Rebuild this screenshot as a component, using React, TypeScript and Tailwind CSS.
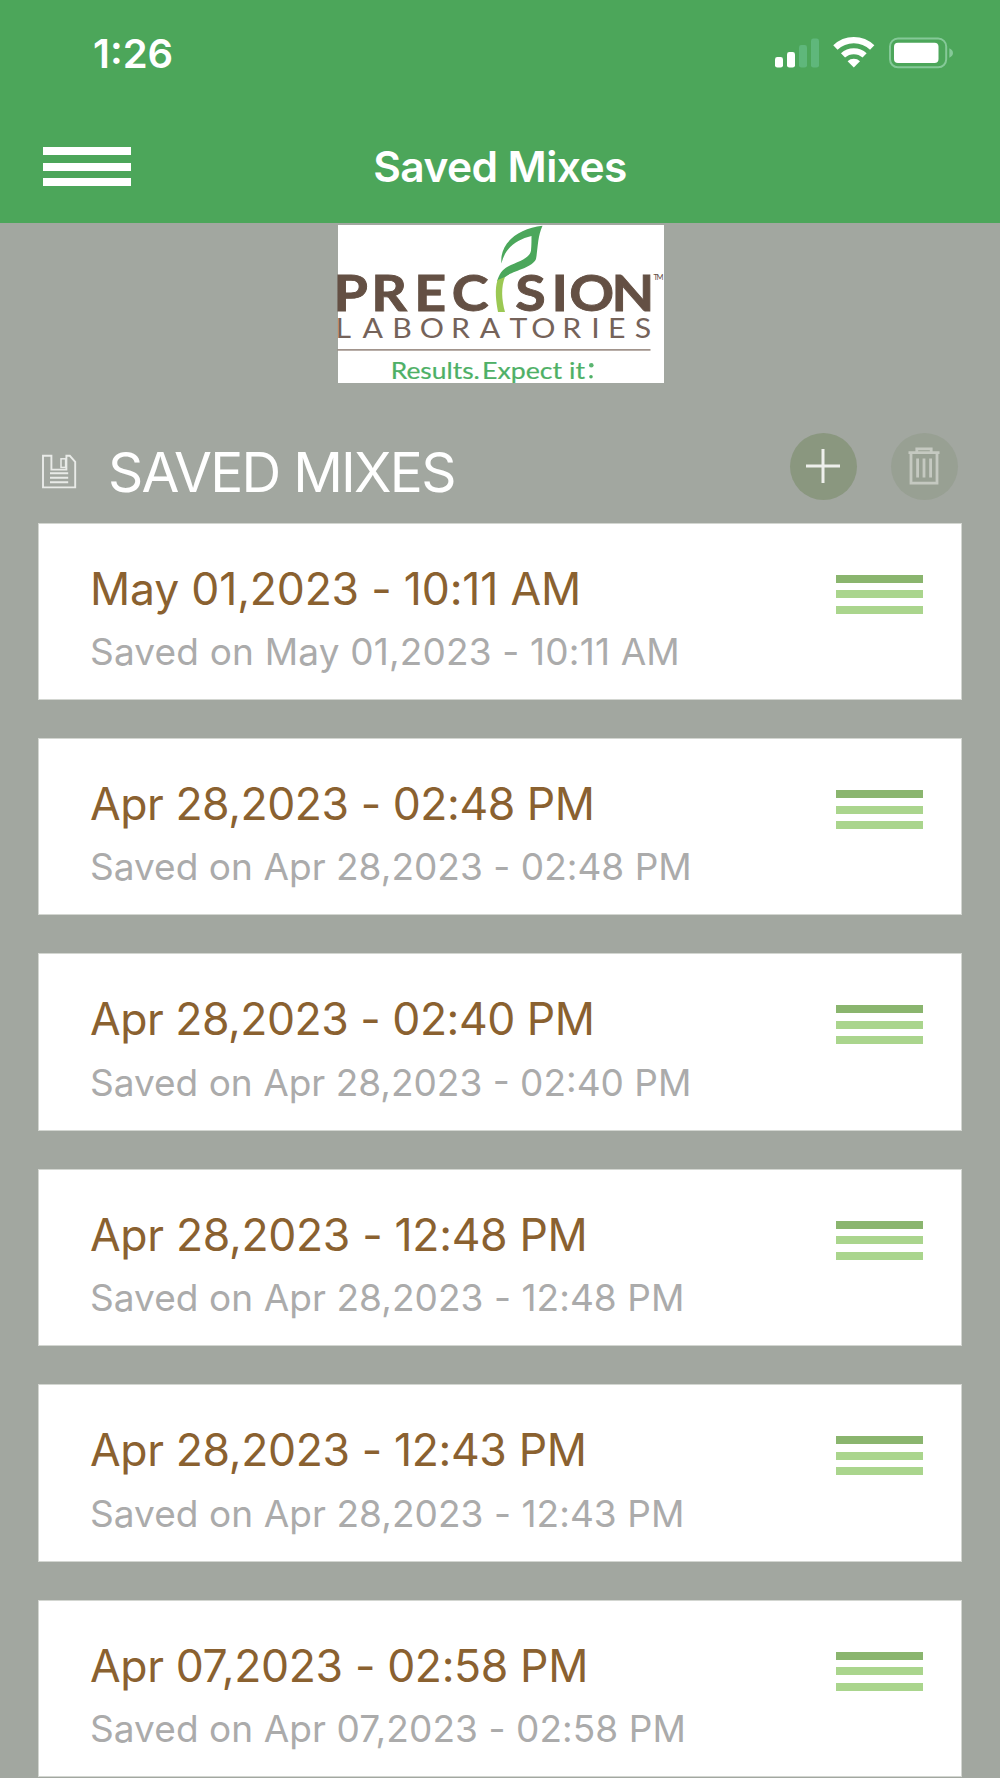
import clsx from 'clsx';

interface SavedMix {
    id: number;
    date: string;
    titleTracking: string;
    noteTracking: string;
}

const savedMixes: SavedMix[] = [
    { id: 1, date: 'May 01,2023 - 10:11 AM', titleTracking: 'tracking-[-0.18px]', noteTracking: 'tracking-[0.17px]' },
    { id: 2, date: 'Apr 28,2023 - 02:48 PM', titleTracking: 'tracking-[-0.45px]', noteTracking: 'tracking-[0.03px]' },
    { id: 3, date: 'Apr 28,2023 - 02:40 PM', titleTracking: 'tracking-[-0.48px]', noteTracking: 'tracking-[0px]' },
    { id: 4, date: 'Apr 28,2023 - 12:48 PM', titleTracking: 'tracking-[-0.32px]', noteTracking: 'tracking-[0.06px]' },
    { id: 5, date: 'Apr 28,2023 - 12:43 PM', titleTracking: 'tracking-[-0.36px]', noteTracking: 'tracking-[0.06px]' },
    { id: 6, date: 'Apr 07,2023 - 02:58 PM', titleTracking: 'tracking-[-0.36px]', noteTracking: 'tracking-[0.07px]' },
];

const StatusIcons = () => (
    <svg width="180" height="36" viewBox="774 35 180 36" fill="none">
        {/* Signal */}
        <rect x="775" y="57" width="8" height="10.6" rx="2.4" fill="#fff" />
        <rect x="787" y="52" width="8" height="15.6" rx="2.4" fill="#fff" />
        <rect x="799" y="45" width="8" height="22.6" rx="2.4" fill="#5fb77b" />
        <rect x="811" y="38.5" width="8" height="29.1" rx="2.4" fill="#5fb77b" />
        {/* Wifi */}
        <path d="M835.4 47.6A26.5 26.5 0 0 1 872.2 47.6" stroke="#fff" strokeWidth="6.2" />
        <path d="M843 55.4A15.8 15.8 0 0 1 864.6 55.4" stroke="#fff" strokeWidth="6" />
        <path d="M853.8 67.6L847.6 61.2A9 9 0 0 1 860 61.2Z" fill="#fff" />
        {/* Battery */}
        <rect x="890" y="38.5" width="56.2" height="28.8" rx="8" stroke="#85c998" strokeWidth="2" />
        <rect x="894" y="42.8" width="44.5" height="20.2" rx="4" fill="#fff" />
        <path d="M949.3 48.3C954.2 50.3 954.2 55.8 949.3 57.8Z" fill="#85c998" />
    </svg>
);

const Logo = () => (
    <svg width="326" height="158" viewBox="338 224.5 326 158" className="overflow-visible bg-white">
        <g fontFamily="Lato, sans-serif" fill="#645044">
            <g transform="scale(1.1 1)">
                <text x="303.1 337.5 376.7 410.6" y="311" fontWeight="700" fontSize="50.5" stroke="#645044" strokeWidth="0.9">PREC</text>
                <text x="468.5 501.3 517.6 556" y="311" fontWeight="700" fontSize="50.5" stroke="#645044" strokeWidth="0.9">SION</text>
                <text
                    x="305.1 329.5 356.6 381.6 410 436.1 463.2 482.9 511.2 537.5 552.7 577.1"
                    y="337.6"
                    fontSize="27.5"
                    fill="#75635a"
                >
                    LABORATORIES
                </text>
            </g>
            <text x="653.5" y="279" fontSize="7.5" textLength="10">TM</text>
        </g>
        <rect x="337.5" y="348.7" width="313" height="1.4" fill="#8b7b71" />
        {/* Leaf */}
        <path
            d="M501.5 263C499 243 518 228 542.5 225.3C537.5 236 538 248 536 258.5C532 268 512 270 504.5 277L497 281C499 274 502 269 508 266C517 261.5 530 258 531 250C531.5 245 531.5 240 531.5 235.5C517 239 505 247 501.5 263Z"
            fill="#4ba75b"
        />
        <path d="M497.5 279.5C494.5 289 496 301 498 311.5H505C501.5 299 501 286 505 276.5Z" fill="#9bc853" />
        <g fontFamily="Lato, sans-serif" fill="#4eb066" stroke="#4eb066" strokeWidth="0.2">
            <text x="390.8" y="378" fontSize="23.8" textLength="89" lengthAdjust="spacingAndGlyphs">Results.</text>
            <text x="482" y="378" fontSize="23.8" textLength="103" lengthAdjust="spacingAndGlyphs">Expect it</text>
        </g>
        <circle cx="591.3" cy="364.7" r="2.3" fill="#5bb571" />
        <circle cx="591" cy="376.3" r="1.8" fill="#4eb066" />
    </svg>
);

const SaveIcon = () => (
    <svg width="36" height="36" viewBox="0 0 36 36" fill="none" stroke="#e9ebe8">
        <path d="M2 1.8H10.4V15.6H25.4V1.8H28.8L34.2 7.8V33.4H2Z" strokeWidth="1.9" />
        <rect x="20" y="4.8" width="4.6" height="8.6" strokeWidth="1.5" />
        <path d="M9 19.2H27.2M9 23.7H27.2M9 28.3H27.2" strokeWidth="1.9" />
    </svg>
);

const PlusIcon = () => (
    <svg width="34" height="34" viewBox="0 0 34 34" stroke="#eef0ec" strokeWidth="3">
        <path d="M17 0V34M0 17H34" />
    </svg>
);

const TrashIcon = () => (
    <svg width="32" height="38" viewBox="0 0 32 38" fill="none" stroke="#c5c9c1" strokeWidth="2.8">
        <path d="M0.5 5.6H31.5M3 5.6V36.2H29V5.6M8.8 5.6V1.8H23.2V5.6" />
        <path d="M9.6 11.5V30.5M16 11.5V30.5M22.6 11.5V30.5" />
    </svg>
);

const MixCard = ({ mix }: { mix: SavedMix }) => (
    <div className="flex h-[177.4px] shrink-0 justify-between border border-[#d3d6d1] bg-white pr-[37.5px] pl-[50.6px]">
        <div className="flex flex-col whitespace-pre">
            <h2 className={clsx('mt-[37px] text-[44.5px] leading-[56px] text-[#8a6130]', mix.titleTracking)}>{mix.date}</h2>
            <p className={clsx('mt-[12.4px] text-[37px] leading-[46px] text-[#ababab]', mix.noteTracking)}>Saved on {mix.date}</p>
        </div>
        <div className="mt-[51px] flex w-[87px] flex-col gap-[7.5px]">
            <div className="h-2 bg-[#8ab56e]" />
            <div className="h-2 bg-[#aad58d]" />
            <div className="h-2 bg-[#aad58d]" />
        </div>
    </div>
);

const App = () => {
    return (
        <div className="flex h-[1778px] w-[1000px] flex-col overflow-hidden bg-[#a2a7a0] font-['Inter',sans-serif]">
            <header className="h-[222.6px] shrink-0 bg-[#4ca65a] text-white">
                <div className="flex h-[110px] items-start justify-between pr-[46px] pl-[93px]">
                    <span className="mt-[30px] text-[40px] leading-[48px] font-semibold">1:26</span>
                    <div className="mt-[35px]">
                        <StatusIcons />
                    </div>
                </div>
                <div className="grid h-[112px] grid-cols-[1fr_auto_1fr] items-start px-[43.4px]">
                    <button className="mt-[37px] flex w-[87.5px] flex-col gap-[7.5px]">
                        <span className="h-2 w-full bg-white" />
                        <span className="h-2 w-full bg-white" />
                        <span className="h-2 w-full bg-white" />
                    </button>
                    <h1 className="mt-[31px] text-[42.5px] leading-[52px] font-semibold tracking-[-0.6px]">Saved Mixes</h1>
                </div>
            </header>

            <div className="mt-[2px] flex shrink-0 justify-center pl-px">
                <Logo />
            </div>

            <div className="flex h-[140.1px] shrink-0 items-start pr-[42.5px] pl-[41px]">
                <div className="mt-[71px]">
                    <SaveIcon />
                </div>
                <h2 className="mt-[55.8px] ml-[31px] text-[55px] leading-[68px] tracking-[-1.75px] text-white">SAVED MIXES</h2>
                <div className="mt-[50.2px] ml-auto flex gap-[34px]">
                    <button className="flex size-[67px] items-center justify-center rounded-full bg-[#8a977f]">
                        <PlusIcon />
                    </button>
                    <button className="flex size-[67px] items-center justify-center rounded-full bg-[#98a093]">
                        <TrashIcon />
                    </button>
                </div>
            </div>

            <main className="flex flex-col gap-[38px] px-[38.4px]">
                {savedMixes.map(mix => <MixCard key={mix.id} mix={mix} />)}
            </main>
        </div>
    );
};

export default App;
